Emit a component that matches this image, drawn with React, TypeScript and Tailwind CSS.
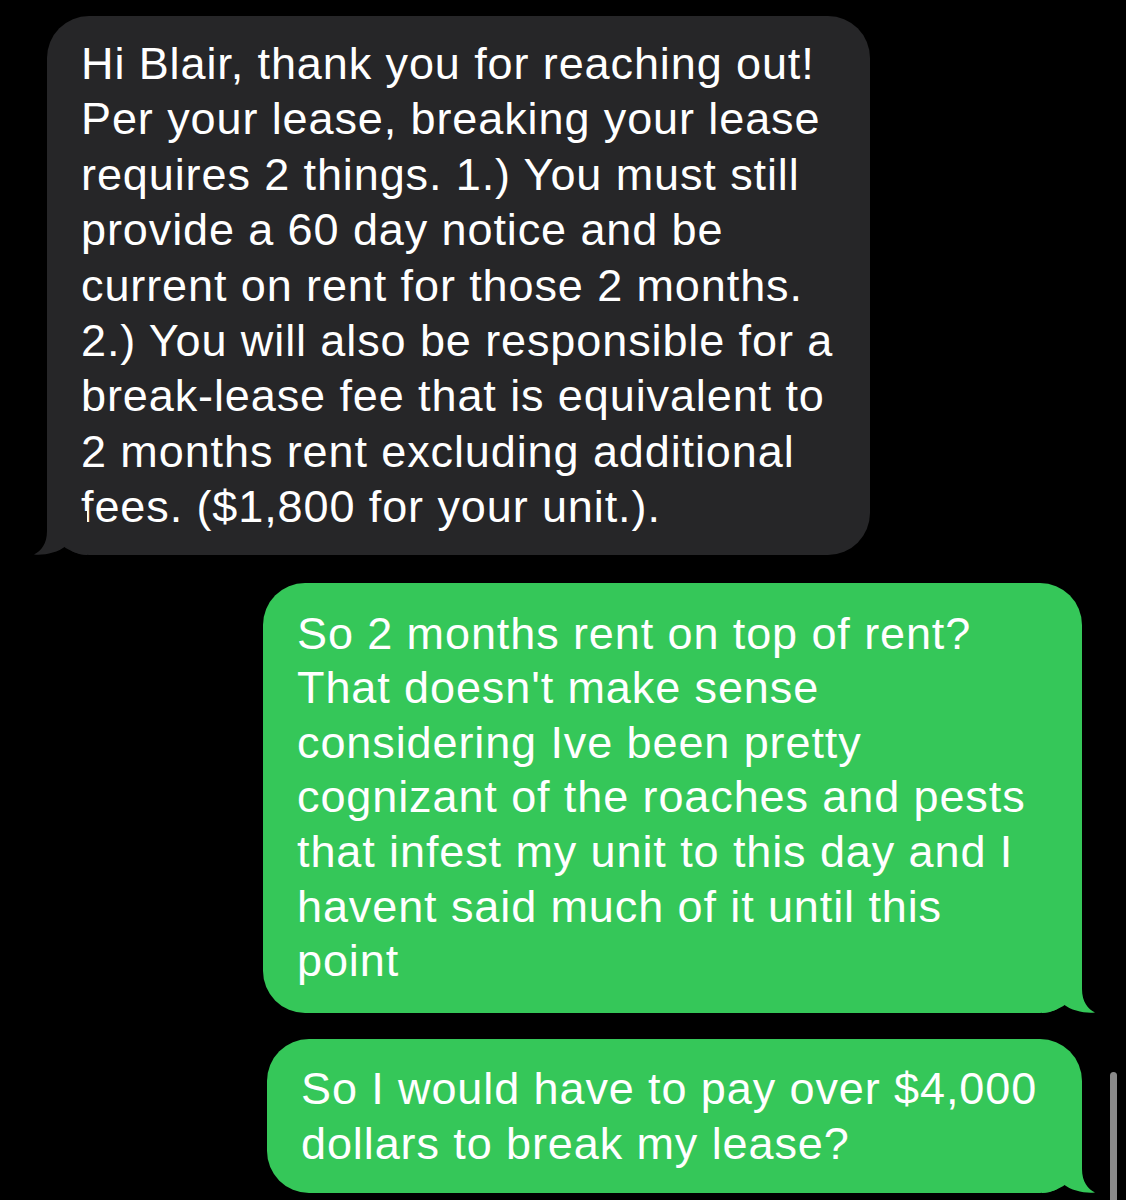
const incoming = [
  "Hi Blair, thank you for reaching out!",
  "Per your lease, breaking your lease",
  "requires 2 things. 1.) You must still",
  "provide a 60 day notice and be",
  "current on rent for those 2 months.",
  "2.) You will also be responsible for a",
  "break-lease fee that is equivalent to",
  "2 months rent excluding additional",
  "fees. ($1,800 for your unit.).",
];

const reply1 = [
  "So 2 months rent on top of rent?",
  "That doesn't make sense",
  "considering Ive been pretty",
  "cognizant of the roaches and pests",
  "that infest my unit to this day and I",
  "havent said much of it until this",
  "point",
];

const reply2 = ["So I would have to pay over $4,000", "dollars to break my lease?"];

// iMessage tail, drawn for the right side; mirrored for incoming bubbles
function Tail({ color, side }: { color: string; side: "left" | "right" }) {
  return (
    <svg
      width="54"
      height="44"
      viewBox="0 0 54 44"
      className={
        side === "right"
          ? "absolute -right-[14px] bottom-0"
          : "absolute -left-[14px] bottom-0 -scale-x-100"
      }
    >
      <path
        d="M0 0 H40 V20 C40 33 46 40 53 43.5 C43 44.5 30 42 21 35 C17 39.5 10 44 0 44 Z"
        fill={color}
      />
    </svg>
  );
}

function Lines({ lines }: { lines: string[] }) {
  return (
    <>
      {lines.map((line) => (
        <div key={line} className="whitespace-nowrap">
          {line}
        </div>
      ))}
    </>
  );
}

export default function App() {
  return (
    <div className="relative w-[1126px] h-[1200px] overflow-hidden bg-black font-['Liberation_Sans',Arial,sans-serif] text-[45px] tracking-[0.9px] text-white">
      <div className="flex flex-col pt-4 pl-[47px] pr-[44px]">
        <div className="relative self-start w-[823px] rounded-[42px] bg-[#262628] pl-[34px] py-[20px] leading-[55.4px]">
          <Lines lines={incoming} />
          <Tail color="#262628" side="left" />
        </div>

        <div className="relative self-end mt-[28px] w-[819px] rounded-[42px] bg-[#35c759] pl-[34px] py-[24px] leading-[54.6px]">
          <Lines lines={reply1} />
          <Tail color="#35c759" side="right" />
        </div>

        <div className="relative self-end mt-[26px] w-[815px] rounded-[42px] bg-[#35c759] pl-[34px] py-[22px] leading-[55px]">
          <Lines lines={reply2} />
          <Tail color="#35c759" side="right" />
        </div>
      </div>

      {/* scroll indicator */}
      <div className="absolute left-[1110px] top-[1072px] h-[160px] w-[7px] rounded-full bg-[#8a8a8a]" />
    </div>
  );
}
